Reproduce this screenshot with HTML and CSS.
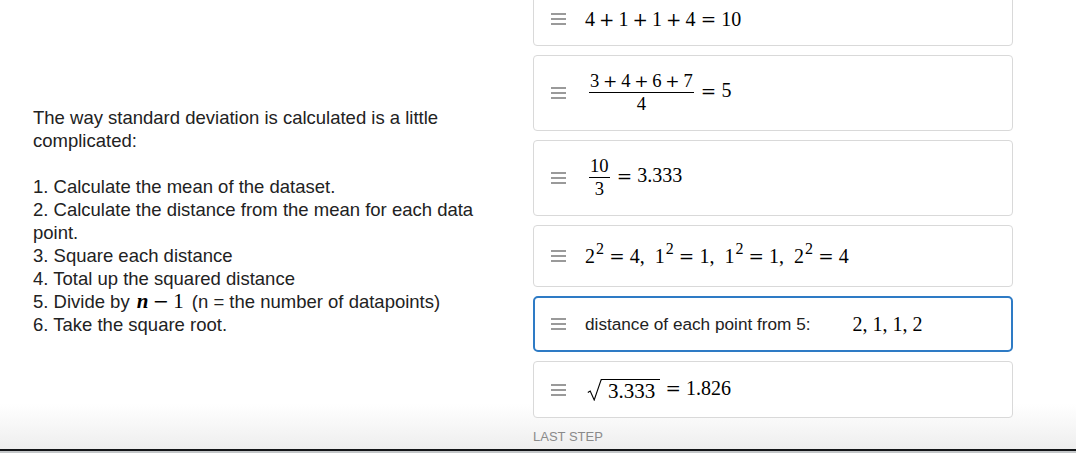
FILE: index.html
```html
<!DOCTYPE html>
<html>
<head>
<meta charset="utf-8">
<link rel="stylesheet" href="styles.css">
</head>
<body>
<div class="screen">
  <section class="intro">
    <p class="lead">The way standard deviation is calculated is a little complicated:</p>
    <ol class="steps">
      <li>1. Calculate the mean of the dataset.</li>
      <li>2. Calculate the distance from the mean for each data point.</li>
      <li>3. Square each distance</li>
      <li>4. Total up the squared distance</li>
      <li>5. Divide by <span class="m inline"><b><i>n</i></b><span class="bin">−</span>1</span> (n = the number of datapoints)</li>
      <li>6. Take the square root.</li>
    </ol>
  </section>

  <section class="stack">
    <div class="card first">
      <svg class="grip" width="15" height="12" viewBox="0 0 15 12"><rect y="0" width="15" height="2"/><rect y="5" width="15" height="2"/><rect y="10" width="15" height="2"/></svg>
      <span class="m">4<span class="bin">+</span>1<span class="bin">+</span>1<span class="bin">+</span>4<span class="rel">=</span>10</span>
    </div>

    <div class="card tall">
      <svg class="grip" width="15" height="12" viewBox="0 0 15 12"><rect y="0" width="15" height="2"/><rect y="5" width="15" height="2"/><rect y="10" width="15" height="2"/></svg>
      <span class="m"><span class="frac"><span class="num">3<span class="bin">+</span>4<span class="bin">+</span>6<span class="bin">+</span>7</span><span class="den">4</span></span><span class="rel">=</span>5</span>
    </div>

    <div class="card tall">
      <svg class="grip" width="15" height="12" viewBox="0 0 15 12"><rect y="0" width="15" height="2"/><rect y="5" width="15" height="2"/><rect y="10" width="15" height="2"/></svg>
      <span class="m"><span class="frac"><span class="num">10</span><span class="den">3</span></span><span class="rel">=</span>3.333</span>
    </div>

    <div class="card raised">
      <svg class="grip" width="15" height="12" viewBox="0 0 15 12"><rect y="0" width="15" height="2"/><rect y="5" width="15" height="2"/><rect y="10" width="15" height="2"/></svg>
      <span class="m">2<sup class="sp">2</sup><span class="rel">=</span>4,<span class="sep"></span>1<sup class="sp">2</sup><span class="rel">=</span>1,<span class="sep"></span>1<sup class="sp">2</sup><span class="rel">=</span>1,<span class="sep"></span>2<sup class="sp">2</sup><span class="rel">=</span>4</span>
    </div>

    <div class="card active">
      <svg class="grip" width="15" height="12" viewBox="0 0 15 12"><rect y="0" width="15" height="2"/><rect y="5" width="15" height="2"/><rect y="10" width="15" height="2"/></svg>
      <span class="txt">distance of each point from 5:</span>
      <span class="m gap">2, 1, 1, 2</span>
    </div>

    <div class="card last">
      <svg class="grip" width="15" height="12" viewBox="0 0 15 12"><rect y="0" width="15" height="2"/><rect y="5" width="15" height="2"/><rect y="10" width="15" height="2"/></svg>
      <span class="m"><span class="sqrt"><svg class="radical" width="15" height="22" viewBox="0 0 15 22"><path d="M0.8 13.4 L3.2 12 L7.2 21 L14.2 0.6 L15 0.6" fill="none" stroke="#000" stroke-width="1.1"/></svg><span class="radicand">3.333</span></span><span class="rel">=</span>1.826</span>
    </div>

    <div class="label">LAST STEP</div>
  </section>
</div>
<div class="edge"></div>
<div class="under"></div>
</body>
</html>
```

FILE: styles.css
```css
html, body {
  margin: 0;
  padding: 0;
}

body {
  font-family: "Liberation Sans", Arial, sans-serif;
  background: #c4c7c9;
  overflow: hidden;
}

.screen {
  height: 449px;
  display: flex;
  align-items: flex-start;
  overflow: hidden;
  background: linear-gradient(to bottom, #ffffff 0, #ffffff 404px, #eeeeee 449px);
}

.edge {
  height: 2px;
  background: #131517;
}

.under {
  height: 2px;
  background: #c4c7c9;
}

/* left explanation */
.intro {
  flex: none;
  width: 455px;
  padding: 106px 15px 0 33px;
  font-size: 18.5px;
  line-height: 23px;
  color: #222;
}

.lead {
  margin: 0 0 23px;
}

.steps {
  list-style: none;
  margin: 0;
  padding: 0;
}

.m {
  font-family: "Liberation Serif", "Times New Roman", serif;
  font-size: 20px;
  color: #000;
  white-space: nowrap;
}

.m.inline {
  line-height: 23px;
  margin: 0 3px 0 2px;
  font-size: 21px;
}

.bin,
.rel {
  font-family: "DejaVu Serif", serif;
  font-size: 0.92em;
}

.bin {
  margin: 0 0.22em;
}

.rel {
  margin: 0 0.28em;
}

/* right stack */
.stack {
  flex: none;
  width: 480px;
  margin-left: 30px;
  margin-top: -12px;
  display: flex;
  flex-direction: column;
  gap: 9px;
}

.card {
  box-sizing: border-box;
  min-height: 58px;
  display: flex;
  align-items: center;
  padding: 0 12px 0 17px;
  background: #fff;
  border: 1px solid #d9d9d9;
  border-radius: 4px;
}

.card.first {
  padding-top: 4px;
}

.card.tall {
  min-height: 76px;
}

.card.raised {
  min-height: 62px;
}

.card.active {
  min-height: 56px;
  border: 2px solid #2e7bc5;
  border-radius: 5px;
  padding-left: 16px;
}

.card.last {
  min-height: 57px;
}

.grip {
  flex: none;
  fill: #9a9a9a;
  margin-right: 19px;
}

.txt {
  font-size: 17.2px;
  color: #222;
}

.gap {
  margin-left: 42px;
}

.frac {
  display: inline-flex;
  flex-direction: column;
  align-items: center;
  vertical-align: middle;
  margin: 0 2px 0 4px;
  line-height: 1;
}

.num {
  font-size: 0.93em;
  padding: 0 1px 1px;
  border-bottom: 1px solid #000;
}

.den {
  font-size: 0.93em;
  padding-top: 2px;
}

.sp {
  font-size: 0.8em;
  line-height: 0;
  vertical-align: 0.55em;
  margin-left: 1px;
}

.sep {
  display: inline-block;
  width: 0.5em;
}

.sqrt {
  display: inline-flex;
  align-items: flex-start;
  vertical-align: -6px;
  margin-left: 2px;
}

.radical {
  flex: none;
}

.radicand {
  border-top: 1.1px solid #000;
  padding: 1px 5px 0 7px;
  margin-left: -1px;
  line-height: 21px;
  font-size: 1.05em;
}

.label {
  margin-top: 2px;
  font-size: 13px;
  color: #8a8a8a;
  letter-spacing: 0;
}
```
